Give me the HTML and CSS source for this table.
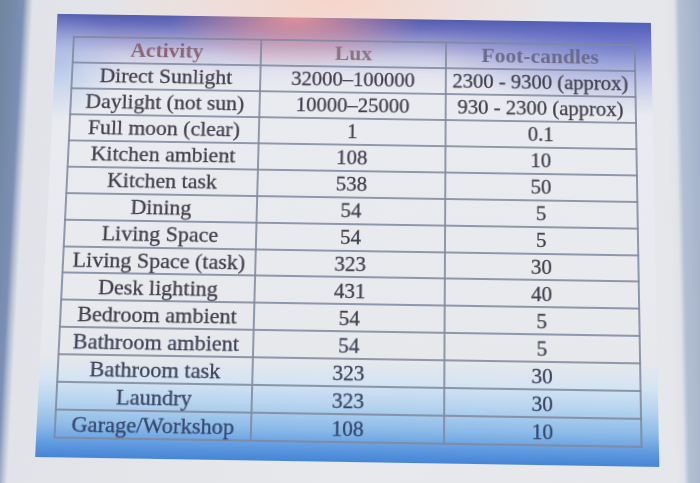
FILE: index.html
```html
<!DOCTYPE html>
<html lang="en">
<head>
<meta charset="utf-8">
<title>Lux and foot-candles</title>
<link rel="stylesheet" href="styles.css">
</head>
<body>
<div class="photo">
  <div class="slide">
    <table class="lux">
      <colgroup>
        <col class="c1"><col class="c2"><col class="c3">
      </colgroup>
      <thead>
        <tr><th class="h1">Activity</th><th class="h2">Lux</th><th class="h3">Foot-candles</th></tr>
      </thead>
      <tbody>
        <tr><td>Direct Sunlight</td><td class="num">32000–100000</td><td class="num">2300 - 9300 (approx)</td></tr>
        <tr><td>Daylight (not sun)</td><td class="num">10000–25000</td><td class="num">930 - 2300 (approx)</td></tr>
        <tr><td>Full moon (clear)</td><td class="num">1</td><td class="num">0.1</td></tr>
        <tr><td>Kitchen ambient</td><td class="num">108</td><td class="num">10</td></tr>
        <tr><td>Kitchen task</td><td class="num">538</td><td class="num">50</td></tr>
        <tr><td>Dining</td><td class="num">54</td><td class="num">5</td></tr>
        <tr><td>Living Space</td><td class="num">54</td><td class="num">5</td></tr>
        <tr><td>Living Space (task)</td><td class="num">323</td><td class="num">30</td></tr>
        <tr><td>Desk lighting</td><td class="num">431</td><td class="num">40</td></tr>
        <tr><td>Bedroom ambient</td><td class="num">54</td><td class="num">5</td></tr>
        <tr class="low"><td>Bathroom ambient</td><td class="num">54</td><td class="num">5</td></tr>
        <tr class="low"><td>Bathroom task</td><td class="num">323</td><td class="num">30</td></tr>
        <tr class="lower"><td>Laundry</td><td class="num">323</td><td class="num">30</td></tr>
        <tr class="lowest"><td>Garage/Workshop</td><td class="num">108</td><td class="num">10</td></tr>
      </tbody>
    </table>
  </div>
</div>
</body>
</html>
```
FILE: styles.css
```css
html, body {
  margin: 0;
  padding: 0;
  overflow: hidden;
  height: 100%;
  background: #6f84ab;
}

body {
  display: flow-root;
}

.photo {
  box-sizing: border-box;
  width: 760px;
  height: 540px;
  margin: -28.5px 0 0 -30px;
  padding: 39px 0 0 76px;
  transform-origin: 50% 50%;
  transform: perspective(1000px) rotateX(6.5deg) rotate(0.9deg);
  background:
    radial-gradient(ellipse 240px 80px at 47% 4%, rgba(247, 212, 200, 0.95), rgba(247, 212, 200, 0)),
    linear-gradient(to right,
      #63799f 0, #71869f 20px, #7a8fb4 40px, #b4bfd4 45px, #e1e3e8 50px,
      #e8e9ec 380px, #e6e7ea 700px, #dfe2e7 709px, #b3bfd3 714px, #a2b0c9 735px, #9aa9c4 760px);
}

.slide {
  box-sizing: border-box;
  width: 608.5px;
  height: 447px;
  padding: 23px 18px 0 16.5px;
  background:
    radial-gradient(ellipse 130px 55px at 40% 0%, rgba(238, 150, 150, 0.9), rgba(238, 150, 150, 0)),
    radial-gradient(ellipse 200px 75px at 95% 5%, rgba(80, 100, 200, 0.55), rgba(80, 100, 200, 0)),
    radial-gradient(ellipse 70px 60px at 0% 12%, rgba(150, 180, 230, 0.6), rgba(150, 180, 230, 0)),
    linear-gradient(to bottom,
      #535cae 0, #6b70bd 10px, #9a9ad0 24px, #c9c8e3 40px, #e2e3ef 58px, #eaebf0 76px,
      #e9eaee 60%, #e6e8ec 78%, #d4e4f3 83%, #b5d3ef 88%, #8cbbe8 93%, #5f9ae0 97%, #4684d5 100%);
}

.lux {
  width: 574px;
  table-layout: fixed;
  border-collapse: collapse;
  font-family: "Liberation Serif", "Times New Roman", serif;
  color: #423f4d;
}

.c1 { width: 192.5px; }
.c2 { width: 189px; }
.c3 { width: 192.5px; }

.lux th,
.lux td {
  height: 24.95px;
  padding: 0;
  border: 2px solid rgba(128, 136, 158, 0.85);
  text-align: center;
  vertical-align: middle;
  font-size: 22px;
  line-height: 24px;
  white-space: nowrap;
  -webkit-text-stroke: 0.3px currentColor;
}

.lux th {
  font-weight: bold;
  -webkit-text-stroke: 0;
}

.h1 { color: #8a6575; }
.h2 { color: #8b7482; }
.h3 { color: #6b6b8d; }

.lux td.num {
  font-size: 21px;
}

.low td { color: #3f4459; }
.lower td { color: #3b4664; }
.lowest td { color: #34466e; }
```
